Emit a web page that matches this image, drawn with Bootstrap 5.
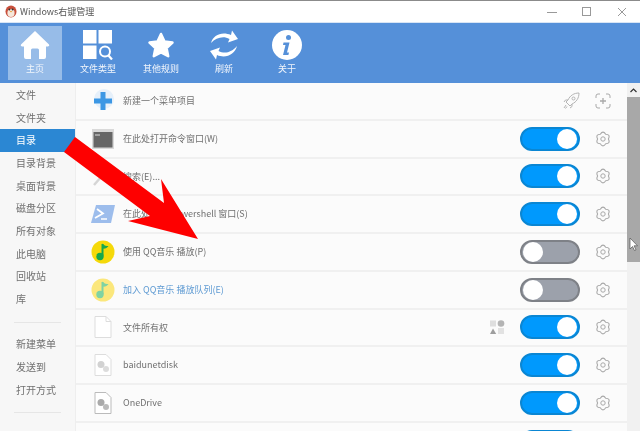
<!DOCTYPE html>
<html lang="zh-CN">
<head>
    <meta charset="UTF-8">
    <meta name="viewport" content="width=device-width, initial-scale=1.0">
    <title>Windows右键管理</title>
    <link href="https://cdn.jsdelivr.net/npm/bootstrap@5.3.0/dist/css/bootstrap.min.css" rel="stylesheet">
    <style>
        html, body { height: 431px; overflow: hidden; }
        body {
            background: #fff;
            color: #666;
            font-family: "Noto Sans CJK SC", "Liberation Sans", sans-serif;
            font-size: 9px;
        }
        .app-shell { width: 640px; height: 431px; position: relative; overflow: hidden; filter: blur(.3px); }
        .title-bar { height: 23px; border-top: 1px solid #8b8b8b; border-bottom: 1px solid #d8e5f5; padding-left: 5px; }
        .title-text { font-size: 9px; color: #555; margin-left: 3px; }
        .win-btns { gap: 21px; padding-right: 11px; }
        .tool-bar { height: 60px; background: #5590d9; padding: 3px 8px; gap: 9px; }
        .tool-btn { width: 54px; height: 54px; color: #f2f6fc; padding-top: 4px; }
        .tool-btn svg { display: block; height: 30px; width: 30px; }
        .tool-btn span { font-size: 9px; line-height: 12px; margin-top: 3px; }
        .tool-btn.current { background: #97bce8; }
        .side-menu { width: 75px; height: 348px; background: #f7f7f7; padding-top: 1px; flex-shrink: 0; }
        .side-item { height: 22.67px; line-height: 22.67px; padding-left: 16px; font-size: 10px; color: #707070; }
        .side-item.current { background: #2b87d3; color: #fff; }
        .side-sep { height: 22.67px; padding-top: 11px; }
        .side-sep div { height: 1px; margin: 0 14px; background: #e6e6e6; }
        .rule-list { flex: 1 1 auto; min-width: 0; background: #fbfbfb; border-left: 1px solid #eee; }
        .list-group-item.rule-row {
            height: 37.75px;
            background: #fbfbfb;
            border: 0;
            border-bottom: 2px solid #f0f0f0;
            padding: 0 16px 0 15px;
            color: #707070;
            font-size: 9px;
            border-radius: 0;
        }
        .rule-ico { width: 24px; height: 24px; flex-shrink: 0; margin-right: 8px; display: block; }
        .rule-name.is-link { color: #5f9bd3; }
        .tgl { width: 60px; height: 24px; border-radius: 12px; display: flex; align-items: center; padding: 0 1px; flex-shrink: 0; border: 2px solid #0a86d3; background: #0099fd; justify-content: flex-end; margin-left: 15px; }
        .tgl::after { content: ""; width: 20px; height: 20px; border-radius: 50%; background: #fff; }
        .tgl.off { background: #9ca1ab; border-color: #7e8187; justify-content: flex-start; }
        .gear-ico { width: 16px; height: 16px; margin-left: 15px; flex-shrink: 0; }
        .scroll-col { width: 13px; flex-shrink: 0; background: #f1f1f1; }
        .scroll-up { height: 14px; }
        .scroll-thumb { height: 165px; background: #a8a8a8; }
        .over-art { position: absolute; left: 0; top: 0; pointer-events: none; }
    </style>
</head>
<body>
<div class="app-shell">
    <!-- title bar -->
    <div class="title-bar d-flex align-items-center justify-content-between">
        <div class="d-flex align-items-center">
            <svg width="12" height="13" viewBox="0 0 12 13"><ellipse cx="6" cy="6.5" rx="5.5" ry="6" fill="#c8503c"/><ellipse cx="6" cy="8" rx="3.6" ry="4" fill="#f6e8dc"/><circle cx="4.4" cy="4.6" r="1" fill="#333"/><circle cx="7.6" cy="4.6" r="1" fill="#333"/><path d="M4.6 6h2.8L6 7.4z" fill="#e9a33b"/></svg>
            <span class="title-text">Windows右键管理</span>
        </div>
        <div class="d-flex align-items-center win-btns">
            <svg width="14" height="14" viewBox="0 0 14 14"><path d="M2 7.5h10" stroke="#999" fill="none"/></svg>
            <svg width="14" height="14" viewBox="0 0 14 14"><rect x="2.5" y="2.5" width="8" height="8" stroke="#999" fill="none"/></svg>
            <svg width="14" height="14" viewBox="0 0 14 14"><path d="M3 3l8 8M11 3l-8 8" stroke="#999" fill="none"/></svg>
        </div>
    </div>

    <!-- toolbar -->
    <div class="tool-bar d-flex">
        <div class="tool-btn current d-flex flex-column align-items-center">
            <svg viewBox="0 0 30 30"><path d="M15 1 L29 14.5 Q30 16 28 16.5 L26 16.5 V27 Q26 29 24 29 H19 V20 Q19 18.500 17.500 18.500 H12.500 Q11 18.500 11 20 V29 H6 Q4 29 4 27 V16.500 H2 Q0 16 1 14.500 Z" fill="#fff"/></svg>
            <span>主页</span>
        </div>
        <div class="tool-btn d-flex flex-column align-items-center">
            <svg viewBox="0 0 30 30"><rect x="0" y="0" width="13.500" height="13.500" fill="#fff"/><rect x="15.500" y="0" width="13.500" height="13.500" fill="#fff"/><rect x="0" y="15.500" width="13.500" height="13.500" fill="#fff"/><circle cx="22" cy="21.500" r="5" fill="none" stroke="#fff" stroke-width="2"/><path d="M25.500 25.500L29 29.500" stroke="#fff" stroke-width="2.200"/></svg>
            <span>文件类型</span>
        </div>
        <div class="tool-btn d-flex flex-column align-items-center">
            <svg viewBox="0 0 30 30"><path d="M15 4 L18.500 11.500 L26.500 12.600 L20.600 18.200 L22.200 26.200 L15 22.300 L7.800 26.200 L9.400 18.200 L3.500 12.600 L11.500 11.500 Z" fill="#fff" stroke="#fff" stroke-width="2.500" stroke-linejoin="round"/></svg>
            <span>其他规则</span>
        </div>
        <div class="tool-btn d-flex flex-column align-items-center">
            <svg viewBox="0 0 30 30"><path d="M2 13 C4 5 13 1 22 5 L23 0.500 L29 9 L19 12.500 L20.500 9 C14 5.500 7 8 2 13Z" fill="#fff"/><path d="M28 16 C26 24 17 29 8 25 L7 29.500 L1 21 L11 17.500 L9.500 21 C16 24.500 23 22 28 16Z" fill="#fff"/></svg>
            <span>刷新</span>
        </div>
        <div class="tool-btn d-flex flex-column align-items-center">
            <svg viewBox="0 0 30 30"><circle cx="15" cy="15" r="15" fill="#fff"/><circle cx="16.500" cy="7.500" r="2.500" fill="#5590d9"/><path d="M11.500 12.500h6l-2.500 10h2l-.6 2.500h-5.400l2.500-10h-2.500z" fill="#5590d9"/></svg>
            <span>关于</span>
        </div>
    </div>

    <div class="d-flex">
        <!-- left menu -->
        <div class="side-menu">
            <div class="side-item">文件</div>
            <div class="side-item">文件夹</div>
            <div class="side-item current">目录</div>
            <div class="side-item">目录背景</div>
            <div class="side-item">桌面背景</div>
            <div class="side-item">磁盘分区</div>
            <div class="side-item">所有对象</div>
            <div class="side-item">此电脑</div>
            <div class="side-item">回收站</div>
            <div class="side-item">库</div>
            <div class="side-sep"><div></div></div>
            <div class="side-item">新建菜单</div>
            <div class="side-item">发送到</div>
            <div class="side-item">打开方式</div>
            <div class="side-sep"><div></div></div>
        </div>

        <!-- rule rows -->
        <div class="rule-list list-group list-group-flush">
            <div class="list-group-item rule-row d-flex align-items-center">
                <svg class="rule-ico" viewBox="0 0 24 24"><circle cx="13" cy="10" r="10" fill="#e6f0fa"/><path d="M9.500 3h5v6.500H21v5h-6.500V21h-5v-6.500H3v-5h6.500z" fill="#3c97e4"/></svg>
                <span class="rule-name flex-grow-1">新建一个菜单项目</span>
                <svg width="19" height="19" viewBox="0 0 19 19" fill="none" stroke="#b5b5b5"><path d="M17 2C12 2 8 4.500 6 9l-2 2 4 4 2-2c4.500-2 7-6 7-11z"/><circle cx="11.500" cy="7.500" r="1.500"/><path d="M6 9H3.500L2 11M10 13v2.500L8 17M4 14l-2 3M5 15.500l-1.500 2"/></svg>
                <svg class="gear-ico" style="margin-left:14px" viewBox="0 0 16 16" fill="none" stroke="#a9a9a9"><path d="M8 5v6M5 8h6" stroke-width="1.300"/><path d="M1 5V3a2 2 0 0 1 2-2h2M11 1h2a2 2 0 0 1 2 2v2M15 11v2a2 2 0 0 1-2 2h-2M5 15H3a2 2 0 0 1-2-2v-2"/></svg>
            </div>
            <div class="list-group-item rule-row d-flex align-items-center">
                <svg class="rule-ico" viewBox="0 0 24 24"><rect x="1" y="2" width="22" height="20" fill="#d9d9d9"/><rect x="2.500" y="5" width="19" height="15.500" fill="#666"/><path d="M4 8h5" stroke="#ddd"/></svg>
                <span class="rule-name flex-grow-1">在此处打开命令窗口(W)</span>
                <span class="tgl"></span>
                <svg class="gear-ico" viewBox="0 0 16 16"><use href="#gear"/></svg>
            </div>
            <div class="list-group-item rule-row d-flex align-items-center">
                <svg class="rule-ico" viewBox="0 0 24 24"><path d="M3 21L11 12" stroke="#d5d5d5" stroke-width="2.500"/></svg>
                <span class="rule-name flex-grow-1">搜索(E)...</span>
                <span class="tgl"></span>
                <svg class="gear-ico" viewBox="0 0 16 16"><use href="#gear"/></svg>
            </div>
            <div class="list-group-item rule-row d-flex align-items-center">
                <svg class="rule-ico" viewBox="0 0 24 24"><path d="M5 3h19l-4 18H0z" fill="#9dbdec"/><path d="M6 7l6 4.500L4 16" stroke="#fff" stroke-width="1.800" fill="none"/><path d="M10 17h6" stroke="#fff" stroke-width="1.500"/></svg>
                <span class="rule-name flex-grow-1">在此处打开 Powershell 窗口(S)</span>
                <span class="tgl"></span>
                <svg class="gear-ico" viewBox="0 0 16 16"><use href="#gear"/></svg>
            </div>
            <div class="list-group-item rule-row d-flex align-items-center">
                <svg class="rule-ico" viewBox="0 0 24 24"><circle cx="12" cy="12" r="11.500" fill="#f5d90a"/><path d="M11.500 4v12" stroke="#17a84c" stroke-width="2"/><path d="M11.500 3.500c2 2.500 4 2.500 6 2.500-1 2-4 3-6 2.500z" fill="#17a84c"/><circle cx="9" cy="16.500" r="3.700" fill="#17a84c"/></svg>
                <span class="rule-name flex-grow-1">使用 QQ音乐 播放(P)</span>
                <span class="tgl off"></span>
                <svg class="gear-ico" viewBox="0 0 16 16"><use href="#gear"/></svg>
            </div>
            <div class="list-group-item rule-row d-flex align-items-center">
                <svg class="rule-ico" viewBox="0 0 24 24"><circle cx="12" cy="12" r="11.500" fill="#fbe77c"/><path d="M11.500 4v12" stroke="#7fd3a3" stroke-width="2"/><path d="M11.500 3.500c2 2.500 4 2.500 6 2.500-1 2-4 3-6 2.500z" fill="#7fd3a3"/><circle cx="9" cy="16.500" r="3.700" fill="#7fd3a3"/></svg>
                <span class="rule-name is-link flex-grow-1">加入 QQ音乐 播放队列(E)</span>
                <span class="tgl off"></span>
                <svg class="gear-ico" viewBox="0 0 16 16"><use href="#gear"/></svg>
            </div>
            <div class="list-group-item rule-row d-flex align-items-center">
                <svg class="rule-ico" viewBox="0 0 24 24"><path d="M4 1.500h11l5 5v16H4z" fill="#fff" stroke="#ddd"/><path d="M15 1.500v5h5" fill="none" stroke="#ddd"/></svg>
                <span class="rule-name flex-grow-1">文件所有权</span>
                <svg width="15" height="15" viewBox="0 0 15 15"><rect x="0" y="0.500" width="6" height="6" fill="#dedede"/><circle cx="11" cy="3.500" r="3.300" fill="#b4b4b4"/><path d="M3 8.500l3.200 5.500H0z" fill="#9e9e9e"/><rect x="8" y="8" width="6" height="6" fill="#e2e2e2"/></svg>
                <span class="tgl"></span>
                <svg class="gear-ico" viewBox="0 0 16 16"><use href="#gear"/></svg>
            </div>
            <div class="list-group-item rule-row d-flex align-items-center">
                <svg class="rule-ico" viewBox="0 0 24 24"><path d="M4 1.500h11l5 5v16H4z" fill="#fff" stroke="#ddd"/><circle cx="10" cy="11.500" r="3.500" fill="#d2d2d2"/><circle cx="15" cy="16" r="3" fill="#dcdcdc"/></svg>
                <span class="rule-name flex-grow-1">baidunetdisk</span>
                <span class="tgl"></span>
                <svg class="gear-ico" viewBox="0 0 16 16"><use href="#gear"/></svg>
            </div>
            <div class="list-group-item rule-row d-flex align-items-center">
                <svg class="rule-ico" viewBox="0 0 24 24"><path d="M4 1.500h11l5 5v16H4z" fill="#fff" stroke="#bbb"/><circle cx="10" cy="11.500" r="3.500" fill="#aaa"/><circle cx="15" cy="16" r="3" fill="#bbb"/></svg>
                <span class="rule-name flex-grow-1">OneDrive</span>
                <span class="tgl"></span>
                <svg class="gear-ico" viewBox="0 0 16 16"><use href="#gear"/></svg>
            </div>
            <div class="list-group-item rule-row d-flex align-items-center">
                <span class="rule-name flex-grow-1"></span>
                <span class="tgl"></span>
                <svg class="gear-ico" viewBox="0 0 16 16"><use href="#gear"/></svg>
            </div>
        </div>

        <!-- scrollbar -->
        <div class="scroll-col">
            <div class="scroll-up d-flex justify-content-center align-items-center">
                <svg width="7" height="5" viewBox="0 0 7 5"><path d="M.5 4L3.500 1l3 3" fill="none" stroke="#333" stroke-width="1.200"/></svg>
            </div>
            <div class="scroll-thumb"></div>
        </div>
    </div>

    <!-- red arrow and mouse pointer lie over the list -->
    <svg class="over-art" width="640" height="431" viewBox="0 0 640 431">
        <polygon points="75,137 164,203 161,179 198,239 128,221 150,216 64,152" fill="#fe0000"/>
        <path d="M630 238v11l2.500-2.500 2 4 1.500-.7-2-4h3.500z" fill="#fff" stroke="#555" stroke-width=".7"/>
    </svg>

    <svg width="0" height="0" class="position-absolute">
        <symbol id="gear" viewBox="0 0 16 16">
            <path d="M5.300 3.320Q8 -1 10.700 3.320Q15.800 3.500 13.400 8Q15.800 12.500 10.700 12.680Q8 17 5.300 12.680Q.2 12.500 2.600 8Q.2 3.500 5.300 3.320Z" fill="none" stroke="#a9a9a9" stroke-width="1.100" stroke-linejoin="round"/>
            <circle cx="8" cy="8" r="2.200" fill="none" stroke="#a9a9a9"/>
        </symbol>
    </svg>
</div>
<script src="https://cdn.jsdelivr.net/npm/bootstrap@5.3.0/dist/js/bootstrap.bundle.min.js"></script>
</body>
</html>
